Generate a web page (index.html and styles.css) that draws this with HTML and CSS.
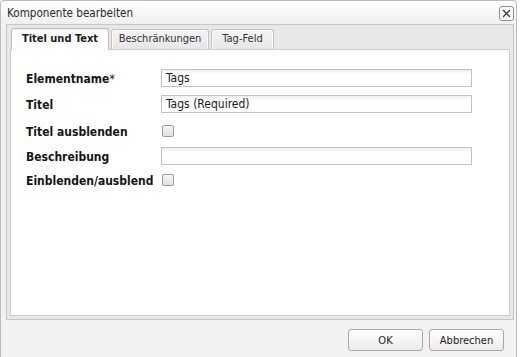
FILE: index.html
```html
<!DOCTYPE html>
<html lang="de">
<head>
<meta charset="utf-8">
<title>Komponente bearbeiten</title>
<link rel="stylesheet" href="styles.css">
</head>
<body>
<div class="dialog">
  <div class="header">
    <span class="title">Komponente bearbeiten</span>
    <button class="close" type="button" aria-label="Schließen">
      <svg width="15" height="15" viewBox="0 0 15 15"><rect x="0.5" y="0.5" width="14" height="14" rx="2.5" ry="2.5" fill="#fbfbfb" stroke="#8c8c8c"/><path d="M4 4 L11 11 M11 4 L4 11" stroke="#3c3c3c" stroke-width="1.3" fill="none"/></svg>
    </button>
  </div>
  <div class="frame">
    <div class="tabs">
      <div class="tab active">Titel und Text</div>
      <div class="tab">Beschränkungen</div>
      <div class="tab">Tag-Feld</div>
    </div>
    <div class="panel">
      <div class="form">
        <div class="lbl">Elementname<span class="req">*</span></div>
        <div class="field"><div class="input">Tags</div></div>
        <div class="lbl">Titel</div>
        <div class="field"><div class="input">Tags (Required)</div></div>
        <div class="lbl">Titel ausblenden</div>
        <div class="field"><span class="check"></span></div>
        <div class="lbl">Beschreibung</div>
        <div class="field"><div class="input"></div></div>
        <div class="lbl">Einblenden/ausblend</div>
        <div class="field"><span class="check"></span></div>
      </div>
    </div>
  </div>
  <div class="footer">
    <button class="btn" type="button">OK</button>
    <button class="btn" type="button">Abbrechen</button>
  </div>
</div>
</body>
</html>
```
FILE: styles.css
```css
* { box-sizing: border-box; }
html, body { margin: 0; padding: 0; background: #ffffff; }
body {
  width: 520px;
  height: 357px;
  overflow: hidden;
  font-family: "DejaVu Sans Condensed", "DejaVu Sans", sans-serif;
  font-stretch: condensed;
  font-size: 11.6px;
  color: #1e1e1e;
}
.dialog {
  width: 517px;
  height: 357px;
  border: 1px solid #bdbdbd;
  border-bottom: 0;
  border-radius: 4px 4px 0 0;
  background: #f2f2f2;
}
.header {
  height: 23px;
  display: flex;
  justify-content: space-between;
  align-items: flex-start;
  background: linear-gradient(#ffffff, #efefef);
  border-radius: 4px 4px 0 0;
}
.title {
  padding-left: 6px;
  margin-top: 3px;
  line-height: 18px;
  color: #2a2a2a;
}
.close {
  width: 15px;
  height: 15px;
  margin: 5px 2px 0 0;
  padding: 0;
  border: 0;
  background: none;
  display: block;
}
.close svg { display: block; }
.frame {
  width: 508px;
  height: 296px;
  margin-left: 5px;
  border: 1px solid #c6c6c6;
  background: #e8e8e8;
}
.tabs {
  height: 24px;
  display: flex;
  align-items: flex-end;
  gap: 2px;
  padding-left: 4px;
  font-size: 11px;
}
.tab {
  height: 20px;
  line-height: 18px;
  text-align: center;
  white-space: nowrap;
  border: 1px solid #c3c3c3;
  border-bottom: 0;
  border-radius: 3px 3px 0 0;
  background: linear-gradient(#f4f4f4, #e6e6e6);
  box-shadow: inset 1px 1px 0 #fbfbfb, inset -1px 0 0 #fbfbfb;
  color: #333333;
}
.tab:nth-child(1) { width: 98px; }
.tab:nth-child(2) { width: 98px; }
.tab:nth-child(3) { width: 63px; }
.tab.active {
  height: 22px;
  line-height: 20px;
  margin-bottom: -1px;
  position: relative;
  z-index: 1;
  font-weight: bold;
  color: #1a1a1a;
  border-color: #bcbcbc;
  background: linear-gradient(#f7f7f7, #ffffff 60%);
  box-shadow: none;
}
.panel {
  height: 267px;
  margin: 0 3px;
  border: 1px solid #cccccc;
  background: #ffffff;
  padding: 15px 15px 0 15px;
}
.form {
  display: grid;
  grid-template-columns: 135px 311px;
  grid-template-rows: 26px 26px 28px 22px 26px;
  align-items: center;
  font-size: 12px;
}
.lbl {
  font-weight: bold;
  line-height: 14px;
  padding-top: 2px;
  color: #151515;
  white-space: nowrap;
}
.req { font-weight: normal; }
.field { display: flex; align-items: center; }
.input {
  width: 311px;
  height: 18px;
  border: 1px solid #c2c2c2;
  background: linear-gradient(#eef1f1, #ffffff 5px);
  padding: 0 4px;
  line-height: 16px;
  color: #1a1a1a;
}
.check {
  display: block;
  width: 12px;
  height: 12px;
  margin-left: 1px;
  border: 1px solid #9d9d9d;
  border-radius: 2px;
  background: linear-gradient(#f6f6f6, #e2e2e2);
}
.footer {
  display: flex;
  justify-content: flex-end;
  gap: 6px;
  padding: 9px 12px 0 0;
}
.btn {
  width: 75px;
  height: 22px;
  padding: 2px 0 0 0;
  border: 1px solid #a9a9a9;
  border-radius: 3px;
  background: linear-gradient(#ffffff, #ebebeb);
  font-family: inherit;
  font-stretch: condensed;
  font-size: 11px;
  line-height: 18px;
  color: #222222;
}
```
